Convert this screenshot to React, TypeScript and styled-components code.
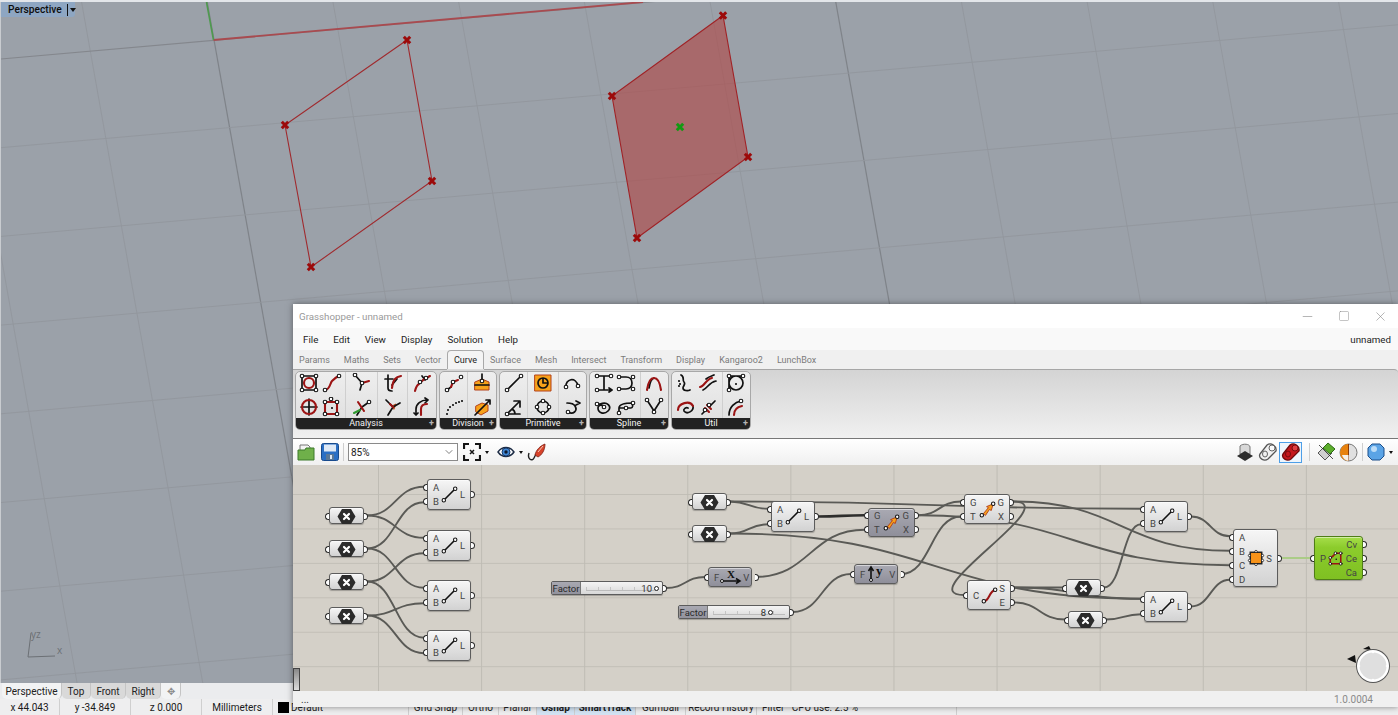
import React from 'react';
import styled, { createGlobalStyle } from 'styled-components';
import { ChevronDown, Minus, Square, X } from 'lucide-react';

const GlobalStyle = createGlobalStyle`
  html, body { margin: 0; padding: 0; background: #9ba1a9; overflow: hidden; }
  * { box-sizing: border-box; }
`;

const UI_FONT = 'Roboto, "Open Sans", "Liberation Sans", sans-serif';

/* ---------- Rhino shell ---------- */

const Desktop = styled.div`
  position: relative;
  width: 1398px;
  height: 715px;
  overflow: hidden;
  display: grid;
  grid-template-rows: 2px 681px 16px 16px;
  font-family: ${UI_FONT};
`;

const TopStrip = styled.div`
  background: #e3e6ea;
`;

const Viewport = styled.div`
  position: relative;
  background: #9ba1a9;
  border-left: 1px solid #c9ccd0;
  svg { display: block; }
`;

const ViewportTitle = styled.div`
  position: absolute;
  left: 0;
  top: 0;
  width: 74px;
  height: 15px;
  background: #8ea6c2;
  border-radius: 0 0 3px 0;
  display: flex;
  align-items: center;
  padding-left: 7px;
  font-size: 10.2px;
  font-weight: 500;
  color: #0c0c0c;
  gap: 5px;
`;

const TitleCaret = styled.span`
  border-left: 1px solid #111;
  height: 12px;
  padding-left: 2px;
  display: flex;
  align-items: center;
  &::after {
    content: '';
    border-left: 3.5px solid transparent;
    border-right: 3.5px solid transparent;
    border-top: 4px solid #111;
  }
`;

const ViewTabs = styled.div`
  background: #ebecee;
  display: flex;
  align-items: stretch;
  padding-left: 2px;
  font-size: 10px;
  color: #222;
`;

const ViewTab = styled.div<{ $active?: boolean; $w: number }>`
  width: ${(p) => p.$w}px;
  display: flex;
  align-items: center;
  justify-content: center;
  background: ${(p) => (p.$active ? '#f2f3f4' : '#d9d9d9')};
  border-radius: 0 0 5px 5px;
  border-right: 1px solid #c4c4c4;
`;

const AddViewTab = styled(ViewTab)`
  color: #8c8c8c;
`;

const StatusRow = styled.div`
  background: #eeeeef;
  display: flex;
  font-size: 10px;
  color: #1a1a1a;
  white-space: nowrap;
`;

const StatusCell = styled.div<{ $w: number; $on?: boolean; $left?: boolean }>`
  width: ${(p) => p.$w}px;
  flex: none;
  display: flex;
  align-items: center;
  justify-content: ${(p) => (p.$left ? 'flex-start' : 'center')};
  border-right: 1px solid #cfcfcf;
  gap: 2px;
  padding-left: ${(p) => (p.$left ? 5 : 0)}px;
  background: ${(p) => (p.$on ? '#d3e3f3' : 'transparent')};
  font-weight: ${(p) => (p.$on ? 700 : 400)};
`;

const Swatch = styled.span`
  width: 11px;
  height: 11px;
  background: #000;
`;

/* ---------- Grasshopper window ---------- */

const GhWindow = styled.div`
  position: absolute;
  left: 293px;
  top: 304px;
  right: 0;
  height: 403px;
  display: flex;
  flex-direction: column;
  background: #f0f0f0;
  box-shadow: 0 0 6px rgba(40, 40, 40, 0.55);
`;

const TitleBar = styled.div`
  height: 24px;
  flex: none;
  background: #fff;
  display: flex;
  align-items: center;
  justify-content: space-between;
  padding: 0 10px 0 6px;
  font-size: 9.75px;
  color: #999;
`;

const WinButtons = styled.div`
  display: flex;
  gap: 23px;
  color: #8a8a8a;
  align-items: center;
`;

const MenuBar = styled.div`
  height: 22px;
  flex: none;
  background: #f9f9f9;
  display: flex;
  align-items: center;
  justify-content: space-between;
  padding: 0 7px 0 10px;
  font-size: 9.75px;
  color: #1c1c1c;
`;

const MenuList = styled.div`
  display: flex;
  gap: 15px;
`;

const TabStrip = styled.div`
  height: 19px;
  flex: none;
  background: #f0f0f0;
  display: flex;
  align-items: flex-end;
  padding-left: 6px;
  gap: 14px;
  font-size: 9px;
  color: #7b7b7b;
  position: relative;
  z-index: 1;
`;

const Tab = styled.div<{ $active?: boolean }>`
  height: ${(p) => (p.$active ? 19 : 18)}px;
  display: flex;
  align-items: center;
  ${(p) => p.$active && `
    background: #f4f4f4;
    color: #222;
    border: 1px solid #a9a9a9;
    border-bottom: none;
    border-radius: 4px 4px 0 0;
    padding: 0 6px;
    margin: 0 -8px;
    box-shadow: 0 1px 0 #dcdcdc;
  `}
`;

const Ribbon = styled.div`
  height: 70px;
  flex: none;
  background: linear-gradient(#d4d4d4, #f0f0f0);
  border-top: 1px solid #a6a6a6;
  border-bottom: 1px solid #777;
  border-top-right-radius: 4px;
  display: flex;
  padding: 1px 0 0 2px;
  gap: 2px;
`;

const Panel = styled.div<{ $w: number }>`
  width: ${(p) => p.$w}px;
  height: 59px;
  border-radius: 5px;
  border: 1px solid #a8a8a8;
  background: linear-gradient(#eeeeee, #dedede);
  display: flex;
  flex-direction: column;
  overflow: hidden;
`;

const PanelBody = styled.div`
  flex: 1;
  min-height: 0;
  display: flex;
`;

const IconGroup = styled.div<{ $w: number; $rows?: number }>`
  width: ${(p) => p.$w}px;
  display: grid;
  grid-template-columns: repeat(${(p) => p.$rows ?? 1}, ${(p) => (p.$rows === 2 ? '22.5px' : '100%')});
  grid-auto-rows: 24px;
  justify-content: center;
  align-content: center;
  justify-items: center;
  align-items: center;
  & + & { border-left: 1px solid #cfcfcf; }
`;

const PanelFooter = styled.div`
  height: 11px;
  flex: none;
  background: #222;
  color: #f2f2f2;
  font-size: 9px;
  line-height: 11px;
  text-align: center;
  position: relative;
  &::after {
    content: '+';
    position: absolute;
    right: 2px;
    top: 0;
    color: #b4b4b4;
    font-weight: 700;
  }
`;

const Toolbar = styled.div`
  height: 26px;
  flex: none;
  background: linear-gradient(#ffffff, #f0f0f0);
  display: flex;
  align-items: center;
  justify-content: space-between;
  padding: 0 1px 0 4px;
`;

const ToolGroup = styled.div`
  display: flex;
  align-items: center;
`;

const ToolGap = styled.span<{ $w: number }>`
  width: ${(p) => p.$w}px;
`;

const ToolSep = styled.span<{ $l?: number; $r?: number }>`
  width: 1px;
  height: 18px;
  background: #cfcfcf;
  margin: 0 ${(p) => p.$r ?? 4}px 0 ${(p) => p.$l ?? 4}px;
`;

const ZoomCombo = styled.div`
  width: 110px;
  height: 18px;
  margin-right: 5px;
  background: #fff;
  border: 1px solid #8a8a8a;
  display: flex;
  align-items: center;
  justify-content: space-between;
  padding: 0 2px;
  font-size: 10px;
  color: #222;
  svg { color: #555; }
`;

const Caret = styled.span`
  border-left: 2.5px solid transparent;
  border-right: 2.5px solid transparent;
  border-top: 3px solid #111;
  margin: 0 4px;
`;

const ActiveTool = styled.span`
  border: 1px solid #4d9fe8;
  background: #eef5fc;
  height: 21px;
  width: 23px;
  display: flex;
  align-items: center;
  justify-content: center;
`;

const Canvas = styled.div`
  position: relative;
  height: 226px;
  flex: none;
  overflow: hidden;
  background-color: #d4d0c8;
  background-image:
    linear-gradient(to right, #bfbcb4 1px, transparent 1px),
    linear-gradient(to bottom, #c2bfb7 1px, transparent 1px);
  background-size: 103.1px 34.45px;
  background-position: 85px 29px;
`;

const WireLayer = styled.svg`
  position: absolute;
  left: 0;
  top: 0;
  width: 100%;
  height: 100%;
`;

const ScrollStub = styled.div`
  position: absolute;
  left: 0;
  bottom: 0;
  width: 7px;
  height: 23px;
  border: 1px solid #444;
  background: linear-gradient(#888, #ddd);
`;

const Compass = styled.svg`
  position: absolute;
  left: 1052px;
  top: 180px;
`;

const WinStatus = styled.div`
  height: 16px;
  flex: none;
  background: #f0f0f0;
  display: flex;
  align-items: center;
  justify-content: space-between;
  padding: 0 3px 0 8px;
  font-size: 10px;
  color: #333;
`;

const VersionText = styled.span`
  color: #8a8a8a;
  margin-left: auto;
  margin-right: 22px;
  font-size: 10px;
`;

/* ---------- Canvas nodes ---------- */

type Tone = 'light' | 'dark' | 'green';

const TONES: Record<Tone, string> = {
  light: 'linear-gradient(#f6f6f6, #d2d2d2)',
  dark: 'linear-gradient(#a9a9b2, #8f8f9a)',
  green: 'linear-gradient(#a6de4a 0, #8ccc2c 25%, #7fc022)',
};

const NodeBox = styled.div<{ $x: number; $y: number; $w: number; $h: number; $tone: Tone }>`
  position: absolute;
  left: ${(p) => p.$x - 293}px;
  top: ${(p) => p.$y - 465}px;
  width: ${(p) => p.$w}px;
  height: ${(p) => p.$h}px;
  background: ${(p) => TONES[p.$tone]};
  border: 1px solid ${(p) => (p.$tone === 'green' ? '#4f7d18' : '#5c5c5c')};
  border-radius: 3px;
  box-shadow: 0 1px 1px rgba(0, 0, 0, 0.25), inset 0 1px 0 rgba(255, 255, 255, 0.5);
  display: grid;
  grid-template-columns: auto 1fr auto;
  font-size: 9.5px;
  color: #444;
`;

const PortCol = styled.div`
  display: flex;
  flex-direction: column;
`;

const PortRow = styled.div<{ $side: 'in' | 'out' }>`
  position: relative;
  flex: 1;
  display: flex;
  align-items: center;
  padding: ${(p) => (p.$side === 'in' ? '0 0 0 5px' : '0 5px 0 0')};
  justify-content: ${(p) => (p.$side === 'in' ? 'flex-start' : 'flex-end')};
`;

const Port = styled.span<{ $side: 'in' | 'out' }>`
  position: absolute;
  top: 50%;
  margin-top: -3.5px;
  width: 4px;
  height: 7px;
  background: #fff;
  border: 1.4px solid #2a2a2a;
  ${(p) => (p.$side === 'in'
    ? 'left: -5px; border-right: none; border-radius: 4px 0 0 4px;'
    : 'right: -5px; border-left: none; border-radius: 0 4px 4px 0;')}
`;

const NodeIcon = styled.div`
  display: flex;
  align-items: center;
  justify-content: center;
`;

const SliderBox = styled.div<{ $x: number; $y: number; $w: number; $h: number }>`
  position: absolute;
  left: ${(p) => p.$x - 293}px;
  top: ${(p) => p.$y - 465}px;
  width: ${(p) => p.$w}px;
  height: ${(p) => p.$h}px;
  border: 1px solid #5c5c5c;
  border-radius: 2px;
  display: flex;
  font-size: 9.5px;
  color: #333;
  box-shadow: 0 1px 1px rgba(0, 0, 0, 0.25);
  background: linear-gradient(#f4f4f4, #d8d8d8);
`;

const SliderLabel = styled.div`
  width: 29px;
  flex: none;
  background: linear-gradient(#a9a9b2, #92929d);
  border-right: 1px solid #777;
  display: flex;
  align-items: center;
  justify-content: center;
  color: #2a2a2a;
`;

const SliderTrack = styled.div<{ $pad: number }>`
  position: relative;
  flex: 1;
  display: flex;
  align-items: center;
  justify-content: flex-end;
  gap: 2px;
  padding-right: ${(p) => p.$pad}px;
  &::before {
    content: '';
    position: absolute;
    left: 5px;
    right: 4px;
    top: 50%;
    height: 3px;
    margin-top: -1px;
    border-bottom: 1px solid #bcbcbc;
    background: repeating-linear-gradient(to right, #c4c4c4 0 1px, transparent 1px 12px);
  }
`;

const SliderValue = styled.span`
  position: relative;
`;

const Knob = styled.span`
  position: relative;
  width: 5px;
  height: 5px;
  border-radius: 50%;
  background: #fff;
  border: 1.3px solid #222;
`;

/* ---------- Icons ---------- */

type Pt = [number, number];

interface RibbonGlyph {
  b?: string;
  r?: string;
  g?: string;
  o?: string;
  dots?: Pt[];
  ticks?: Pt[];
}

const Glyph: React.FC<RibbonGlyph & { size?: number }> = ({ b, r, g, o, dots, ticks, size = 20 }) => (
  <svg width={size} height={size} viewBox="0 0 20 20" fill="none" strokeLinecap="round" strokeLinejoin="round">
    {o && <path d={o} fill="#f7a11a" stroke="#b3401a" strokeWidth="1" />}
    {b && <path d={b} stroke="#111" strokeWidth="1.7" />}
    {r && <path d={r} stroke="#9c1414" strokeWidth="2.1" />}
    {g && <path d={g} stroke="#2f9a2f" strokeWidth="2" />}
    {ticks && ticks.map(([x, y]) => <circle key={`${x}-${y}`} cx={x} cy={y} r="1.1" fill="#111" />)}
    {dots && dots.map(([x, y]) => <circle key={`${x}-${y}`} cx={x} cy={y} r="1.8" fill="#fff" stroke="#111" strokeWidth="1.1" />)}
  </svg>
);

const PANELS: { name: string; w: number; groups: { w: number; rows?: number; items: RibbonGlyph[] }[] }[] = [
  {
    name: 'Analysis',
    w: 142,
    groups: [
      {
        w: 50,
        rows: 2,
        items: [
          { b: 'M3 3H17V17H3Z', r: 'M15 10a5 5 0 1 1-10 0a5 5 0 1 1 10 0', dots: [[3, 3], [17, 3], [3, 17], [17, 17]] },
          { r: 'M3 17C8 17 8 10 10 8S14 4 17 3', dots: [[3, 17], [17, 3]] },
          { r: 'M17 10a7 7 0 1 1-14 0a7 7 0 1 1 14 0', b: 'M10 2V18M2 10H18' },
          { r: 'M3 5H15V17H3Z', dots: [[3, 5], [15, 5], [3, 17], [15, 17], [9, 2]], ticks: [[10, 11]] },
        ],
      },
      {
        w: 32,
        items: [
          { b: 'M3 2L10 10L8 17', r: 'M10 10L17 8', dots: [[3, 2], [10, 10]] },
          { b: 'M5 18L10 10L17 5', r: 'M6 5L12 14', g: 'M2 16L8 13', dots: [[17, 5]] },
        ],
      },
      {
        w: 31,
        items: [
          { b: 'M5 2V15Q5 18 9 18M2 6H10M9 12L14 6', r: 'M9 15C10 6 13 4 18 3' },
          { b: 'M3 3L10 10L5 18M10 10L17 6', r: 'M7 7L10 10', o: 'M9 9L13 7L11 12Z' },
        ],
      },
      {
        w: 29,
        items: [
          { r: 'M3 18C4 14 5 12 7 11M10 8C12 6 14 5 18 3', b: 'M10 3L13 7', dots: [[8, 9], [14, 5]] },
          { b: 'M4 18V12C4 7 9 3 15 3M13 1L16 3L13 6M2 16L4 18L6 16', r: 'M9 18V12C9 9 11 7 15 7' },
        ],
      },
    ],
  },
  {
    name: 'Division',
    w: 58,
    groups: [
      {
        w: 28,
        items: [
          { b: 'M3 17L7 14', r: 'M7 14L9 9L14 7', dots: [[3, 17], [9, 9], [17, 4]] },
          { ticks: [[3, 17], [4, 13], [6, 10], [9, 8], [12, 6], [15, 5], [18, 4]] },
        ],
      },
      {
        w: 30,
        items: [
          { o: 'M3 9L10 6L17 9V17H3Z', b: 'M10 1V8M3 12H17', dots: [[10, 8]] },
          { o: 'M4 9L10 6L16 8V14L9 18L4 15Z', b: 'M3 18L18 3M14 3H18V7' },
        ],
      },
    ],
  },
  {
    name: 'Primitive',
    w: 88,
    groups: [
      {
        w: 28,
        items: [
          { b: 'M3 17L17 3', dots: [[3, 17], [17, 3]] },
          { b: 'M3 17L15 5M10 4H16V10M3 17H16M11 17C11 14 10 13 8 12', dots: [[3, 17]] },
        ],
      },
      {
        w: 31,
        items: [
          { o: 'M2 2H18V18H2Z', b: 'M15 10a5 5 0 1 1-10 0a5 5 0 1 1 10 0M10 6V10H14' },
          { b: 'M16 10a6 6 0 1 1-12 0a6 6 0 1 1 12 0', dots: [[10, 4], [4, 10], [16, 10], [10, 16]] },
        ],
      },
      {
        w: 29,
        items: [
          { b: 'M4 14C3 6 14 3 16 13', dots: [[4, 14], [16, 13]] },
          { b: 'M6 15C11 18 16 14 13 9C12 7 9 6 5 6M14 4L18 6L14 8', dots: [[6, 15]] },
        ],
      },
    ],
  },
  {
    name: 'Spline',
    w: 80,
    groups: [
      {
        w: 51,
        rows: 2,
        items: [
          { b: 'M3 3H17M10 3V17M3 17H17M15 15L18 17L15 19', dots: [[3, 3], [17, 3], [3, 17]] },
          { b: 'M3 4H10C18 4 18 16 10 16H3', dots: [[3, 4], [17, 4], [3, 16], [17, 16]] },
          { b: 'M3 7H6C14 4 18 10 14 14C10 18 4 16 4 11C4 8 8 7 10 10', dots: [[3, 7], [10, 10]] },
          { b: 'M3 16V11C3 7 8 6 17 6M3 11H15C17 11 17 8 16 6', dots: [[3, 16], [17, 6], [10, 11]] },
        ],
      },
      {
        w: 29,
        items: [
          { b: 'M10 5C7 6 6 9 5 15', r: 'M3 17C4 10 6 5 10 5C14 5 16 10 17 17' },
          { b: 'M3 3L10 14L17 3', dots: [[3, 3], [17, 3], [10, 15]] },
        ],
      },
    ],
  },
  {
    name: 'Util',
    w: 80,
    groups: [
      {
        w: 51,
        rows: 2,
        items: [
          { b: 'M5 2C9 4 6 7 8 9C10 11 7 13 7 15C7 18 12 18 14 17', ticks: [[3, 8], [4, 11], [3, 13]] },
          { r: 'M2 14C6 14 8 6 14 5', b: 'M5 17C10 15 11 9 18 8M8 6C12 3 14 3 16 2' },
          { r: 'M2 13C2 6 14 3 17 9', b: 'M17 9C18 14 11 18 8 14C7 12 10 10 12 11' },
          { b: 'M4 17L8 13M12 9L17 4', r: 'M7 11L11 15M9 8L13 12', dots: [[7, 13], [11, 8]] },
        ],
      },
      {
        w: 29,
        items: [
          { b: 'M3 17V3H17M17 10a7 7 0 1 1-14 0a7 7 0 1 1 14 0', dots: [[3, 17], [3, 3], [17, 3]], ticks: [[10, 11]] },
          { b: 'M3 18C3 10 9 5 15 4', r: 'M8 18C8 13 11 10 16 9', dots: [[15, 4]] },
        ],
      },
    ],
  },
];

const LineIcon = () => <Glyph b="M4 16L16 4" dots={[[4, 16], [16, 4]]} size={19} />;
const OrientIcon = () => (
  <Glyph b="M3 17L5 15" o="M6 14L11 8L9 7L16 4L14 11L12 10L8 16Z" dots={[[4, 16], [16, 4]]} size={19} />
);
const CurveIcon = () => <Glyph r="M4 16C10 16 9 6 16 4" dots={[[4, 16], [16, 4]]} size={19} />;
const SurfaceIcon = () => (
  <svg width="18" height="18" viewBox="0 0 22 22">
    <rect x="4" y="4" width="14" height="14" fill="#f7931a" stroke="#222" strokeWidth="1.8" />
    {[[11, 3], [11, 19], [3, 8], [3, 14], [19, 8], [19, 14]].map(([x, y]) => (
      <circle key={`${x}-${y}`} cx={x} cy={y} r="1.4" fill="#fff" stroke="#111" strokeWidth="0.9" />
    ))}
  </svg>
);
const AreaIcon = () => (
  <Glyph r="M3 17V9C6 8 8 6 10 3H17V17Z" dots={[[3, 17], [17, 17], [17, 3], [10, 3], [3, 9]]} ticks={[[11, 11]]} size={15} />
);
const HexIcon = () => (
  <svg width="19" height="17" viewBox="0 0 19 17">
    <path d="M5 1H14L18.5 8.5L14 16H5L0.5 8.5Z" fill="#2b2b2b" />
    <path d="M7 6L12 11M12 6L7 11" stroke="#fff" strokeWidth="2.2" strokeLinecap="round" />
  </svg>
);
const VecXIcon = () => (
  <svg width="24" height="18" viewBox="0 0 24 18">
    <text x="8" y="10" fontFamily="Liberation Serif, serif" fontSize="11" fontWeight="700" fill="#111">X</text>
    <path d="M3 13H20M17 10.5L21 13L17 15.5" stroke="#111" strokeWidth="1.5" fill="none" />
    <circle cx="3" cy="13" r="1.5" fill="#fff" stroke="#111" />
  </svg>
);
const VecYIcon = () => (
  <svg width="24" height="18" viewBox="0 0 24 18">
    <text x="11" y="10" fontFamily="Liberation Serif, serif" fontSize="13" fontWeight="700" fill="#111">y</text>
    <path d="M6 15V3M3.5 6L6 2L8.5 6" stroke="#111" strokeWidth="1.6" fill="none" />
    <circle cx="6" cy="15" r="1.5" fill="#fff" stroke="#111" />
  </svg>
);

const ICONS = {
  line: LineIcon,
  orient: OrientIcon,
  curve: CurveIcon,
  surface: SurfaceIcon,
  area: AreaIcon,
  hex: HexIcon,
  vx: VecXIcon,
  vy: VecYIcon,
};

/* ---------- Definition data ---------- */

interface GhNode {
  id: string;
  x: number;
  y: number;
  w: number;
  h: number;
  ins: string[];
  outs: string[];
  icon: keyof typeof ICONS;
  tone?: Tone;
}

const hex = (id: string, x: number, y: number): GhNode => ({ id, x, y, w: 35, h: 17, ins: [''], outs: [''], icon: 'hex' });
const line = (id: string, x: number, y: number): GhNode => ({ id, x, y, w: 44, h: 31, ins: ['A', 'B'], outs: ['L'], icon: 'line' });

const NODES: GhNode[] = [
  hex('h1', 329, 507),
  hex('h2', 329, 540),
  hex('h3', 329, 573),
  hex('h4', 329, 607),
  line('l1', 427, 479),
  line('l2', 427, 530),
  line('l3', 427, 580),
  line('l4', 427, 630),
  hex('ha', 692, 493),
  hex('hb', 692, 525),
  line('lm', 771, 501),
  { id: 'o1', x: 868, y: 508, w: 47, h: 29, ins: ['G', 'T'], outs: ['G', 'X'], icon: 'orient', tone: 'dark' },
  { id: 'o2', x: 964, y: 494, w: 46, h: 30, ins: ['G', 'T'], outs: ['G', 'X'], icon: 'orient' },
  { id: 'vx', x: 708, y: 567, w: 44, h: 20, ins: ['F'], outs: ['V'], icon: 'vx', tone: 'dark' },
  { id: 'vy', x: 854, y: 564, w: 44, h: 20, ins: ['F'], outs: ['V'], icon: 'vy', tone: 'dark' },
  { id: 'ce', x: 967, y: 580, w: 44, h: 30, ins: ['C'], outs: ['S', 'E'], icon: 'curve' },
  hex('h5', 1066, 579),
  hex('h6', 1068, 611),
  line('r1', 1144, 501),
  line('r2', 1144, 591),
  { id: 'su', x: 1233, y: 529, w: 45, h: 58, ins: ['A', 'B', 'C', 'D'], outs: ['S'], icon: 'surface' },
  { id: 'ar', x: 1314, y: 536, w: 49, h: 44, ins: ['P'], outs: ['Cv', 'Ce', 'Ca'], icon: 'area', tone: 'green' },
];

const SLIDERS = [
  { id: 's1', x: 551, y: 581, w: 112, h: 14, value: '10', pad: 3 },
  { id: 's2', x: 678, y: 605, w: 112, h: 14, value: '8', pad: 16 },
];

type Wire = [string, number, string, number, ('thick' | 'green')?];

const WIRES: Wire[] = [
  ['h1', 0, 'l1', 0], ['h1', 0, 'l2', 0],
  ['h2', 0, 'l1', 1], ['h2', 0, 'l3', 0],
  ['h3', 0, 'l2', 1], ['h3', 0, 'l4', 0],
  ['h4', 0, 'l3', 1], ['h4', 0, 'l4', 1],
  ['ha', 0, 'lm', 0], ['ha', 0, 'r1', 0],
  ['hb', 0, 'lm', 1], ['hb', 0, 'r2', 0],
  ['lm', 0, 'o1', 0, 'thick'],
  ['vx', 0, 'o1', 1],
  ['o1', 0, 'o2', 0], ['o1', 0, 'su', 2],
  ['vy', 0, 'o2', 1],
  ['o2', 0, 'su', 1], ['o2', 0, 'ce', 0],
  ['s1', 0, 'vx', 0], ['s2', 0, 'vy', 0],
  ['ce', 0, 'h5', 0], ['ce', 0, 'r2', 0], ['ce', 1, 'h6', 0],
  ['h5', 0, 'r1', 1], ['h6', 0, 'r2', 1],
  ['r1', 0, 'su', 0], ['r2', 0, 'su', 3],
  ['su', 0, 'ar', 0, 'green'],
];

const outPoint = (id: string, i: number): Pt => {
  const s = SLIDERS.find((n) => n.id === id);
  if (s) return [s.x + s.w + 3, s.y + s.h / 2];
  const n = NODES.find((m) => m.id === id) as GhNode;
  return [n.x + n.w + 3, n.y + (n.h * (i + 0.5)) / n.outs.length];
};

const inPoint = (id: string, i: number): Pt => {
  const n = NODES.find((m) => m.id === id) as GhNode;
  return [n.x - 3, n.y + (n.h * (i + 0.5)) / n.ins.length];
};

const wirePath = ([x1, y1]: Pt, [x2, y2]: Pt) => {
  const d = x2 > x1 ? (x2 - x1) * 0.5 : 55;
  return `M${x1 - 293} ${y1 - 465}C${x1 - 293 + d} ${y1 - 465} ${x2 - 293 - d} ${y2 - 465} ${x2 - 293} ${y2 - 465}`;
};

/* ---------- Viewport drawing ---------- */

const SLOPE_X = 0.178;
const SLOPE_Y = -0.088;

const RhinoMark: React.FC<{ x: number; y: number; green?: boolean }> = ({ x, y, green }) => (
  <path
    d={`M${x - 3.2} ${y - 3.2}L${x + 3.2} ${y + 3.2}M${x + 3.2} ${y - 3.2}L${x - 3.2} ${y + 3.2}`}
    stroke={green ? '#129a12' : '#9c0a0a'}
    strokeWidth="3"
  />
);

const QUAD_A: Pt[] = [[406, 40], [284, 125], [310, 267], [431, 181]];
const QUAD_B: Pt[] = [[722, 15.5], [611, 96], [636, 238], [747, 157]];
const toPoints = (q: Pt[]) => q.map((p) => p.join(',')).join(' ');

const ViewportDrawing = () => (
  <svg width="1398" height="681" viewBox="0 2 1398 681">
    {Array.from({ length: 12 }, (_, k) => {
      const x0 = -45.5 + 125.7 * k;
      const major = k === 2 || k === 7;
      return (
        <line key={k} x1={x0} y1={0} x2={x0 + SLOPE_X * 683} y2={683}
          stroke={major ? '#7f8389' : '#92969d'} strokeWidth={major ? 1.2 : 0.9} />
      );
    })}
    {Array.from({ length: 8 }, (_, k) => {
      const y0 = 59 + 88.7 * k;
      return (
        <line key={k} x1={0} y1={y0} x2={1398} y2={y0 + SLOPE_Y * 1398}
          stroke={k === 0 ? '#84878d' : '#92969d'} strokeWidth={k === 0 ? 1.2 : 0.9} />
      );
    })}
    <line x1="212.5" y1="40" x2="642" y2="2" stroke="#a84b50" strokeWidth="1.8" />
    <line x1="212.5" y1="40" x2="205.5" y2="2" stroke="#4e9a4e" strokeWidth="1.6" />
    <polygon points={toPoints(QUAD_A)} fill="none" stroke="#a02a2e" strokeWidth="1.1" />
    <polygon points={toPoints(QUAD_B)} fill="rgb(177,68,67)" fillOpacity="0.6" stroke="#a02226" strokeWidth="1.1" />
    {[...QUAD_A, ...QUAD_B].map(([x, y]) => <RhinoMark key={`${x}-${y}`} x={x} y={y} />)}
    <RhinoMark x={679} y={127} green />
    <path d="M30 633L27 657L54 656" fill="none" stroke="#6c7075" strokeWidth="1" />
    <text x="30" y="638" fontSize="10" fill="#6c7075" fontFamily="Open Sans, sans-serif">yz</text>
    <text x="56" y="654" fontSize="10" fill="#6c7075" fontFamily="Open Sans, sans-serif">x</text>
  </svg>
);

/* ---------- Toolbar icons ---------- */

const OpenIcon = () => (
  <svg width="18" height="18" viewBox="0 0 18 18">
    <path d="M3 5V2H11L13 4V8H3Z" fill="#f4f4f4" stroke="#777" />
    <path d="M1 7H8L9 5H17V17H1Z" fill="#6fb04a" stroke="#3c7a2a" />
  </svg>
);
const SaveIcon = () => (
  <svg width="18" height="18" viewBox="0 0 18 18">
    <rect x="0.5" y="0.5" width="17" height="17" rx="2" fill="#2b6fc4" stroke="#174a8c" />
    <rect x="3" y="1.5" width="12" height="7" fill="#dfe9f5" />
    <rect x="5" y="11" width="8" height="6" fill="#5b7896" />
    <rect x="9" y="12" width="2" height="4" fill="#dfe9f5" />
  </svg>
);
const FitIcon = () => (
  <svg width="18" height="18" viewBox="0 0 18 18" fill="none" stroke="#151515" strokeWidth="2.2">
    <path d="M1 6V1H6M12 1H17V6M17 12V17H12M6 17H1V12" />
    <path d="M7 7L11 11M11 7L7 11" strokeWidth="1.5" />
  </svg>
);
const EyeIcon = () => (
  <svg width="18" height="14" viewBox="0 0 18 14">
    <path d="M1 7C5 1 13 1 17 7C13 13 5 13 1 7Z" fill="#fff" stroke="#1c2b44" strokeWidth="1.4" />
    <circle cx="9" cy="7" r="4" fill="#3f86d4" stroke="#173a6b" />
    <circle cx="9" cy="7" r="1.7" fill="#0e1a2e" />
  </svg>
);
const BrushIcon = () => (
  <svg width="19" height="19" viewBox="0 0 19 19" fill="none">
    <path d="M2 10C0 16 5 19 7 15L9 11" stroke="#222" strokeWidth="1.4" />
    <path d="M8 12C9 7 13 3 18 1C18 7 15 12 11 14Z" fill="#d8432a" stroke="#7a1e14" strokeWidth="0.8" />
    <path d="M11 9L16 3" stroke="#f3c9b8" />
  </svg>
);
const PreviewIcon: React.FC<{ body: string; edge: string; cap: string }> = ({ body, edge, cap }) => (
  <svg width="20" height="20" viewBox="0 0 20 20">
    <path d="M2 12L9 3C13 0 19 4 18 9L10 17C6 20 0 16 2 12Z" fill={body} stroke={edge} strokeWidth="1.3" />
    <ellipse cx="14" cy="6" rx="3" ry="3" fill={cap} stroke={edge} strokeWidth="0.9" />
    <ellipse cx="7" cy="12" rx="2.5" ry="3" fill="none" stroke={edge} strokeWidth="0.9" />
  </svg>
);
const MeshShadeIcon = () => (
  <svg width="20" height="20" viewBox="0 0 20 20">
    <path d="M5 4C8 1 15 2 15 5L15 12H5Z" fill="#d8d8d8" stroke="#777" />
    <path d="M2 14L10 9L18 14L10 19Z" fill="#2c2c2c" />
  </svg>
);
const GreenClipIcon = () => (
  <svg width="20" height="20" viewBox="0 0 20 20">
    <path d="M2 11L9 4L16 11L9 18Z" fill="#cfcfcf" stroke="#555" />
    <path d="M7 6L12 1L19 7L14 12Z" fill="#5cae2c" stroke="#2d6a14" />
    <path d="M3 3L17 17" stroke="#222" strokeWidth="0.8" />
  </svg>
);
const HalfBallIcon = () => (
  <svg width="19" height="19" viewBox="0 0 19 19">
    <circle cx="9.5" cy="9.5" r="8.5" fill="#e0e0e0" stroke="#777" />
    <path d="M9.5 1A8.5 8.5 0 0 0 9.5 18Z" fill="#e8820e" />
    <path d="M9.5 1V18" stroke="#8a3a0a" />
    <path d="M3 12A8 8 0 0 0 9.5 18V12Z" fill="#f5f0ea" />
  </svg>
);
const BlueBallIcon = () => (
  <svg width="18" height="18" viewBox="0 0 18 18">
    <path d="M5 1H13L17 5V13L13 17H5L1 13V5Z" fill="#5ba4e6" stroke="#1d4f8a" />
    <circle cx="7" cy="6" r="3" fill="#bcdcf7" />
  </svg>
);

/* ---------- Page ---------- */

const MENU = ['File', 'Edit', 'View', 'Display', 'Solution', 'Help'];
const TABS = ['Params', 'Maths', 'Sets', 'Vector', 'Curve', 'Surface', 'Mesh', 'Intersect', 'Transform', 'Display', 'Kangaroo2', 'LunchBox'];
const STATUS_TAIL: [string, number, boolean?][] = [
  ['Grid Snap', 54], ['Ortho', 36], ['Planar', 38], ['Osnap', 38, true], ['SmartTrack', 61, true],
  ['Gumball', 50], ['Record History', 71],
];

const App: React.FC = () => (
  <Desktop>
    <GlobalStyle />
    <TopStrip />
    <Viewport>
      <ViewportDrawing />
      <ViewportTitle>Perspective<TitleCaret /></ViewportTitle>
    </Viewport>
    <ViewTabs>
      <ViewTab $active $w={60}>Perspective</ViewTab>
      <ViewTab $w={29}>Top</ViewTab>
      <ViewTab $w={35}>Front</ViewTab>
      <ViewTab $w={35}>Right</ViewTab>
      <AddViewTab $active $w={20}>✥</AddViewTab>
    </ViewTabs>
    <StatusRow>
      <StatusCell $w={60}>x 44.043</StatusCell>
      <StatusCell $w={71}>y -34.849</StatusCell>
      <StatusCell $w={71}>z 0.000</StatusCell>
      <StatusCell $w={71}>Millimeters</StatusCell>
      <StatusCell $w={136} $left><Swatch />Default</StatusCell>
      {STATUS_TAIL.map(([label, w, on]) => <StatusCell key={label} $w={w} $on={on}>{label}</StatusCell>)}
      <StatusCell $w={200} $left>Filter &nbsp; CPU use: 2.5 %</StatusCell>
    </StatusRow>

    <GhWindow>
      <TitleBar>
        Grasshopper - unnamed
        <WinButtons>
          <Minus size={15} strokeWidth={1} />
          <Square size={12} strokeWidth={1} />
          <X size={15} strokeWidth={1} />
        </WinButtons>
      </TitleBar>
      <MenuBar>
        <MenuList>{MENU.map((m) => <span key={m}>{m}</span>)}</MenuList>
        <span>unnamed</span>
      </MenuBar>
      <TabStrip>
        {TABS.map((t) => <Tab key={t} $active={t === 'Curve'}>{t}</Tab>)}
      </TabStrip>
      <Ribbon>
        {PANELS.map((panel) => (
          <Panel key={panel.name} $w={panel.w}>
            <PanelBody>
              {panel.groups.map((group, gi) => (
                <IconGroup key={gi} $w={group.w} $rows={group.rows}>
                  {group.items.map((item, ii) => <Glyph key={ii} {...item} />)}
                </IconGroup>
              ))}
            </PanelBody>
            <PanelFooter>{panel.name}</PanelFooter>
          </Panel>
        ))}
      </Ribbon>
      <Toolbar>
        <ToolGroup>
          <OpenIcon />
          <ToolGap $w={6} />
          <SaveIcon />
          <ToolSep />
          <ZoomCombo>85%<ChevronDown size={12} strokeWidth={1.5} /></ZoomCombo>
          <FitIcon />
          <Caret />
          <ToolGap $w={4} />
          <EyeIcon />
          <Caret />
          <BrushIcon />
        </ToolGroup>
        <ToolGroup>
          <MeshShadeIcon />
          <ToolGap $w={3} />
          <PreviewIcon body="#f0f0f0" edge="#555" cap="#fafafa" />
          <ToolGap $w={1} />
          <ActiveTool><PreviewIcon body="#c4161c" edge="#6e0a0c" cap="#e04044" /></ActiveTool>
          <ToolSep $l={7} $r={6} />
          <GreenClipIcon />
          <ToolGap $w={3} />
          <HalfBallIcon />
          <ToolSep />
          <BlueBallIcon />
          <Caret />
        </ToolGroup>
      </Toolbar>
      <Canvas>
        <WireLayer>
          {WIRES.map(([from, oi, to, ii, kind], i) => (
            <path
              key={i}
              d={wirePath(outPoint(from, oi), inPoint(to, ii))}
              fill="none"
              stroke={kind === 'green' ? '#a9cc84' : kind === 'thick' ? '#2e2e2c' : '#5a5a56'}
              strokeWidth={kind === 'thick' ? 2.6 : 1.9}
            />
          ))}
        </WireLayer>
        {NODES.map((n) => {
          const Icon = ICONS[n.icon];
          return (
            <NodeBox key={n.id} $x={n.x} $y={n.y} $w={n.w} $h={n.h} $tone={n.tone ?? 'light'}>
              <PortCol>
                {n.ins.map((p, i) => <PortRow key={i} $side="in"><Port $side="in" />{p}</PortRow>)}
              </PortCol>
              <NodeIcon><Icon /></NodeIcon>
              <PortCol>
                {n.outs.map((p, i) => <PortRow key={i} $side="out">{p}<Port $side="out" /></PortRow>)}
              </PortCol>
            </NodeBox>
          );
        })}
        {SLIDERS.map((s) => (
          <SliderBox key={s.id} $x={s.x} $y={s.y} $w={s.w} $h={s.h}>
            <SliderLabel>Factor</SliderLabel>
            <SliderTrack $pad={s.pad}>
              <SliderValue>{s.value}</SliderValue>
              <Knob />
              <Port $side="out" />
            </SliderTrack>
          </SliderBox>
        ))}
        <ScrollStub />
        <Compass width="46" height="40" viewBox="0 0 46 40">
          <path d="M2 14L10 10L11 18Z" fill="#111" />
          <path d="M18 4L24 1L26 5Z" fill="#111" />
          <circle cx="28" cy="21" r="17" fill="#555" />
          <circle cx="28" cy="21" r="16" fill="#fff" />
          <circle cx="28" cy="21" r="13.5" fill="#dfdfdf" />
          <path d="M28 8.5L25.5 6H30.5ZM28 33.5L25.5 36H30.5ZM15.5 21L13 18.5V23.5ZM40.5 21L43 18.5V23.5Z" fill="#fff" />
        </Compass>
      </Canvas>
      <WinStatus>
        <span>...</span>
        <VersionText>1.0.0004</VersionText>
      </WinStatus>
    </GhWindow>
  </Desktop>
);

export default App;
